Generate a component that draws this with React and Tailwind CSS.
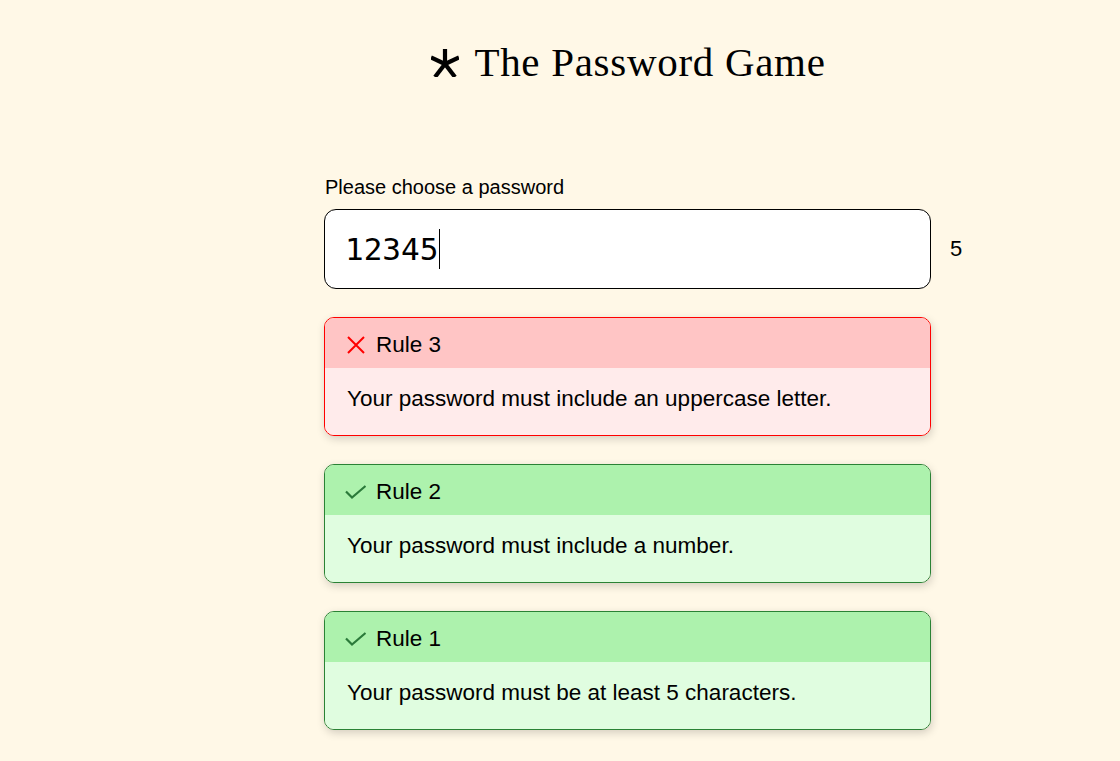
import React from 'react';

const rules = [
  { id: 3, ok: false, text: 'Your password must include an uppercase letter.' },
  { id: 2, ok: true, text: 'Your password must include a number.' },
  { id: 1, ok: true, text: 'Your password must be at least 5 characters.' },
];

const Asterisk = () => (
  <svg width="28" height="28" viewBox="0 0 28 28" className="mr-[15px] mt-[2px]">
    <g stroke="#000" strokeWidth="4.2" fill="none">
      <line x1="14" y1="0" x2="14" y2="15" />
      <line x1="0" y1="8.5" x2="14" y2="15" />
      <line x1="28" y1="8.5" x2="14" y2="15" />
      <line x1="4" y1="28" x2="14" y2="15" />
      <line x1="24" y1="28" x2="14" y2="15" />
    </g>
  </svg>
);

const RuleCard = ({ rule }) => {
  const bad = !rule.ok;
  return (
    <div
      className={
        'rounded-[10px] border overflow-hidden shadow-[1px_3px_8px_rgba(0,0,0,0.17)] ' +
        (bad ? 'border-[#ff0000]' : 'border-[#2a8235]')
      }
    >
      <div
        className={
          'h-[50px] flex items-center pt-[3px] text-[22.5px] ' +
          (bad ? 'bg-[#ffc5c5] pl-[22px]' : 'bg-[#adf2ad] pl-[20px]')
        }
      >
        {bad ? (
          <svg width="18" height="18" viewBox="0 0 18 18" className="mr-[11px]">
            <path d="M1 1 L17 17 M17 1 L1 17" stroke="#ff0000" strokeWidth="2" />
          </svg>
        ) : (
          <svg width="22" height="14" viewBox="0 0 22 14" className="mr-[9px]">
            <path d="M1 6.5 L7 12.5 L20.5 1" stroke="#2b7a3a" strokeWidth="2.2" fill="none" />
          </svg>
        )}
        <span>Rule {rule.id}</span>
      </div>
      <div
        className={
          'h-[67px] flex items-center pl-[22px] pb-[6px] text-[22.5px] ' +
          (bad ? 'bg-[#ffebeb]' : 'bg-[#e0fde0]')
        }
      >
        {rule.text}
      </div>
    </div>
  );
};

export default function App() {
  return (
    <div className="min-h-[761px] bg-[#fff8e7] text-black font-['Liberation_Sans',Arial,sans-serif]">
      <div className="ml-[324px] w-[607px] pt-[34px]">
        <div className="flex items-center justify-center h-[56px] pl-[2px]">
          <Asterisk />
          <h1 className="text-[41px] font-['Liberation_Serif',serif] tracking-[0.7px] leading-none">
            The Password Game
          </h1>
        </div>

        <div className="mt-[86px] text-[20px] leading-[22px] pl-[1px]">Please choose a password</div>

        <div className="relative mt-[11px]">
          <div className="h-[80px] bg-white border border-black rounded-[12px] flex items-center pl-[20px]">
            <span className="text-[31px] font-['DejaVu_Sans_Mono',monospace]">12345</span>
            <span className="w-px h-[40px] bg-black ml-px" />
          </div>
          <span className="absolute left-[626px] top-[23px] text-[22px]">5</span>
        </div>

        <div className="mt-[28px] flex flex-col gap-[28px]">
          {rules.map((r) => (
            <RuleCard key={r.id} rule={r} />
          ))}
        </div>
      </div>
    </div>
  );
}
